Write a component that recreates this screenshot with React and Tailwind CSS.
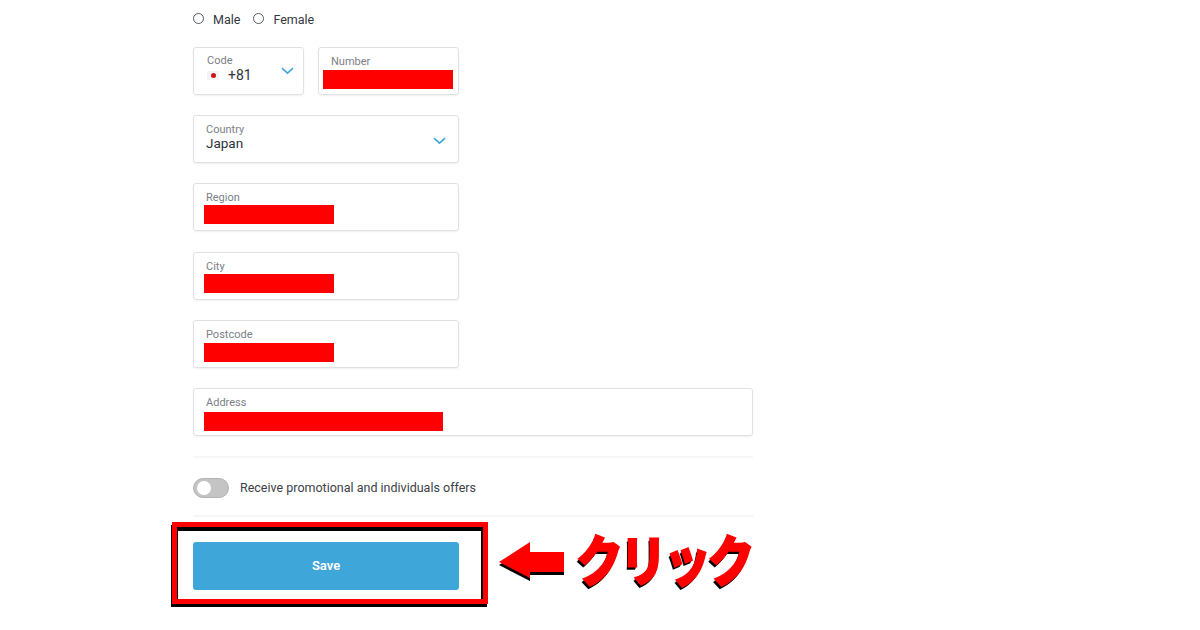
const Chevron = ({ className }) => (
  <svg className={className} width="13" height="8" viewBox="0 0 13 8" fill="none">
    <path d="M1 1.2l5.5 5 5.5-5" stroke="#3fa6da" strokeWidth="1.6" />
  </svg>
);

const Radio = ({ label }) => (
  <div className="flex items-center">
    <span className="w-[11px] h-[11px] rounded-full border border-[#555b63] bg-white -mt-[2px]" />
    <span className="ml-[9px] mt-[3px] text-[12.5px] leading-none text-[#33383f]">{label}</span>
  </div>
);

const Field = ({ label, width, barWidth, barClass, className = "" }) => (
  <div className={`${width} ${className} h-[48px] rounded-[3px] border border-[#dfe1e4] shadow-[0_1px_2px_rgba(0,0,0,0.06)] pl-3 pt-[7px]`}>
    <div className="text-[11px] leading-[14px] text-[#7b8087]">{label}</div>
    <div className={`${barWidth} ${barClass} h-[19px] bg-[#ff0000]`} />
  </div>
);

const ClickArrow = () => (
  <svg width="70" height="44" viewBox="0 0 70 44" className="absolute left-[498px] top-[541px]">
    <path d="M1 21L32 1v10h34v20H32v6z" fill="#000" transform="translate(0 3)" />
    <path d="M1 21L32 1v10h34v20H32v6z" fill="#ff0000" />
  </svg>
);

export default function App() {
  return (
    <div className="relative w-[1200px] h-[630px] overflow-hidden bg-white font-['Roboto','Noto_Sans',sans-serif]">
      <div className="w-[560px] ml-[193px] pt-[12px]">
        {/* gender */}
        <div className="flex gap-[13px] h-[14px]">
          <Radio label="Male" />
          <Radio label="Female" />
        </div>

        {/* phone */}
        <div className="flex gap-[14px] mt-[21px]">
          <div className="relative w-[111px] h-[48px] rounded-[3px] border border-[#dfe1e4] shadow-[0_1px_2px_rgba(0,0,0,0.06)] pl-[13px] pt-[6px]">
            <div className="text-[11px] leading-[13px] text-[#7b8087]">Code</div>
            <div className="flex items-center">
              <span className="flex items-center justify-center w-[12px] h-[9px] bg-[#f4f2f2]">
                <span className="w-[5px] h-[5px] rounded-full bg-[#c8161d]" />
              </span>
              <span className="ml-[9px] text-[14px] leading-[17px] text-[#2e3238]">+81</span>
            </div>
            <Chevron className="absolute right-[9px] top-[19px]" />
          </div>
          <Field label="Number" width="w-[141px]" barWidth="w-[130px]" barClass="mt-[1px] -ml-[8px]" />
        </div>

        {/* country */}
        <div className="relative w-[266px] h-[48px] mt-[20px] rounded-[3px] border border-[#dfe1e4] shadow-[0_1px_2px_rgba(0,0,0,0.06)] pl-3 pt-[7px]">
          <div className="text-[11px] leading-[13px] text-[#7b8087]">Country</div>
          <div className="text-[13.5px] leading-[15px] text-[#2e3238]">Japan</div>
          <Chevron className="absolute right-[12px] top-[21px]" />
        </div>

        <div className="flex flex-col gap-[20px] mt-[20px]">
          <Field label="Region" width="w-[266px]" barWidth="w-[130px]" barClass="-ml-[2px]" />
          <Field label="City" width="w-[266px]" barWidth="w-[130px]" barClass="-ml-[2px]" className="mt-[1px]" />
          <Field label="Postcode" width="w-[266px]" barWidth="w-[130px]" barClass="mt-[1px] -ml-[2px]" />
          <Field label="Address" width="w-[560px]" barWidth="w-[239px]" barClass="mt-[2px] -ml-[2px]" />
        </div>

        <div className="h-[2px] bg-[#f6f6f6] mt-[20px]" />

        {/* offers */}
        <div className="relative flex items-center h-[57px]">
          <div className="relative mt-[2px] w-[36px] h-[20px] rounded-full bg-[#c4c4c4] border border-[#b3b3b3]">
            <span className="absolute left-[3px] top-[2px] w-[14px] h-[14px] rounded-full bg-white" />
          </div>
          <span className="ml-[11px] mt-[3px] text-[12.5px] text-[#3c4148]">Receive promotional and individuals offers</span>
        </div>

        <div className="h-[2px] bg-[#f6f6f6]" />

        <button className="block w-[266px] h-[48px] mt-[25px] rounded-[3px] bg-[#3fa6da] text-white text-[13px] font-semibold">
          Save
        </button>
      </div>

      {/* annotations over the form */}
      <div className="absolute left-[172px] top-[522px] w-[316px] h-[82px] border-[5px] border-[#ff0000] shadow-[-1px_3px_0_#000]">
        <div className="w-full h-full border-t-[4px] border-l-[1px] border-r-[2px] border-black" />
      </div>
      <ClickArrow />
      <div className="absolute left-[576px] top-[517px] origin-left scale-x-[0.86] text-[55px] leading-[80px] font-black tracking-[-4px] whitespace-nowrap text-[#ff0000] font-['Noto_Sans_CJK_JP',sans-serif] [text-shadow:-2px_3px_0_#000,-1px_2px_0_#000] [-webkit-text-stroke:1.5px_#ff0000]">
        クリック
      </div>
    </div>
  );
}
